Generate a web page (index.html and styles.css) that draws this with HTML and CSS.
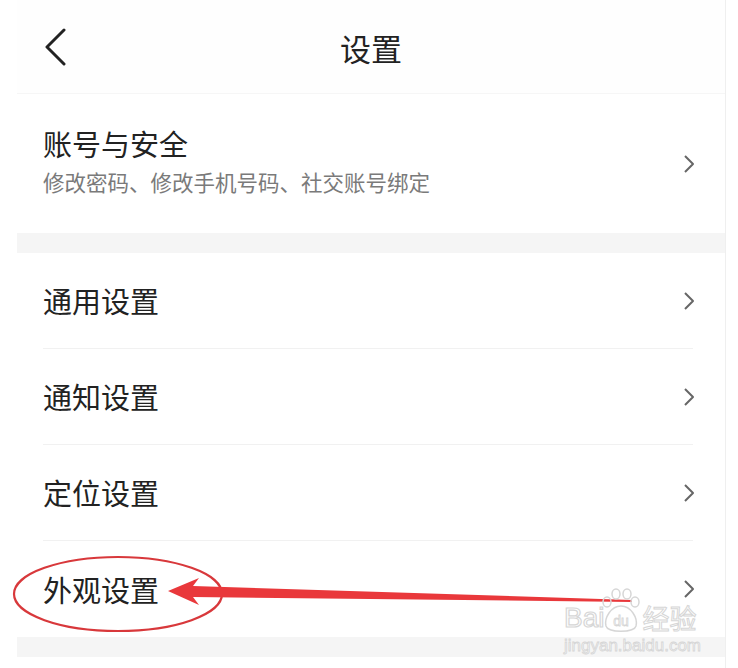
FILE: index.html
```html
<!DOCTYPE html>
<html lang="zh-CN">
<head>
    <meta charset="UTF-8">
    <meta name="viewport" content="width=device-width, initial-scale=1.0">
    <title>设置</title>
    <link rel="stylesheet" href="styles.css">
</head>
<body>
    <div class="screen">
        <div class="status-blur"></div>
        <header class="topbar">
            <svg class="back" width="24" height="38" viewBox="0 0 24 38">
                <path d="M20 2 L3 19 L20 36" fill="none" stroke="#222" stroke-width="3" stroke-linecap="round" stroke-linejoin="round"/>
            </svg>
            <h1 class="title">设置</h1>
        </header>

        <section class="group">
            <div class="item item-account">
                <div class="item-text">
                    <div class="item-name">账号与安全</div>
                    <div class="item-desc">修改密码、修改手机号码、社交账号绑定</div>
                </div>
                <svg class="arrow" width="12" height="20" viewBox="0 0 12 20">
                    <path d="M2 2 L10 10 L2 18" fill="none" stroke="#666" stroke-width="2" stroke-linejoin="round"/>
                </svg>
            </div>
        </section>

        <div class="gap"></div>

        <section class="group">
            <div class="item">
                <div class="item-name">通用设置</div>
                <svg class="arrow" width="12" height="20" viewBox="0 0 12 20">
                    <path d="M2 2 L10 10 L2 18" fill="none" stroke="#666" stroke-width="2" stroke-linejoin="round"/>
                </svg>
            </div>
            <div class="item">
                <div class="item-name">通知设置</div>
                <svg class="arrow" width="12" height="20" viewBox="0 0 12 20">
                    <path d="M2 2 L10 10 L2 18" fill="none" stroke="#666" stroke-width="2" stroke-linejoin="round"/>
                </svg>
            </div>
            <div class="item">
                <div class="item-name">定位设置</div>
                <svg class="arrow" width="12" height="20" viewBox="0 0 12 20">
                    <path d="M2 2 L10 10 L2 18" fill="none" stroke="#666" stroke-width="2" stroke-linejoin="round"/>
                </svg>
            </div>
            <div class="item">
                <div class="item-name">外观设置</div>
                <svg class="arrow" width="12" height="20" viewBox="0 0 12 20">
                    <path d="M2 2 L10 10 L2 18" fill="none" stroke="#666" stroke-width="2" stroke-linejoin="round"/>
                </svg>
            </div>
        </section>

        <div class="gap"></div>
    </div>

    <!-- annotation drawn over the screenshot -->
    <svg class="markup" width="738" height="668" viewBox="0 0 738 668">
        <ellipse cx="118" cy="594" rx="104" ry="37" fill="none" stroke="#d8383b" stroke-width="2.2"/>
        <polygon points="168,591 199,578 193,586 632,600 632,602 193,597 199,605" fill="#e9383b"/>
    </svg>

    <div class="watermark">
        <div class="wm-top">
            <span class="wm-bai">Bai</span>
            <svg class="wm-paw" width="40" height="46" viewBox="0 0 40 46">
                <g fill="none" stroke="#d6d6d6" stroke-width="1.5">
                    <ellipse cx="6" cy="14" rx="4" ry="5"/>
                    <ellipse cx="15" cy="6" rx="4" ry="5"/>
                    <ellipse cx="26" cy="6" rx="4" ry="5"/>
                    <ellipse cx="34" cy="14" rx="4" ry="5"/>
                    <path d="M20 18 C10 18 3 30 5 38 C7 45 33 45 35 38 C37 30 30 18 20 18 Z"/>
                </g>
                <text x="20" y="38" text-anchor="middle" class="wm-du">du</text>
            </svg>
            <span class="wm-cn">经验</span>
        </div>
        <div class="wm-url">jingyan.baidu.com</div>
    </div>
</body>
</html>
```

FILE: styles.css
```css
body {
    margin: 0;
    width: 738px;
    height: 668px;
    overflow: hidden;
    background: #fff;
    font-family: "Noto Sans CJK SC", "Noto Sans", sans-serif;
    color: #222;
    position: relative;
}
.screen {
    margin-left: 17px;
    width: 708px;
    height: 668px;
    border-right: 1px solid #efefef;
    position: relative;
}
.status-blur {
    position: absolute;
    left: 145px;
    top: 10px;
    width: 418px;
    height: 22px;
    background: #f8f8f8;
    filter: blur(3px);
}
.topbar {
    height: 94px;
    display: flex;
    align-items: center;
    justify-content: center;
    position: relative;
    background: #fefefe;
    border-bottom: 1px solid #f6f6f6;
    box-sizing: border-box;
}
.back {
    position: absolute;
    left: 27px;
    top: 28px;
}
.title {
    margin: 0;
    font-size: 31px;
    font-weight: 400;
    line-height: 1;
    padding-top: 2px;
}
.group {
    background: #fff;
}
.item {
    height: 96px;
    margin: 0 32px 0 26px;
    display: flex;
    align-items: center;
    justify-content: space-between;
    border-bottom: 1px solid #f1f1f1;
    box-sizing: border-box;
}
.item:last-child {
    border-bottom: none;
}
.item-account {
    height: 139px;
    border-bottom: none;
    padding-bottom: 6px;
}
.item-account .arrow {
    margin-top: 6px;
}
.item-name {
    font-size: 29px;
    line-height: 1;
    color: #222;
}
.item-desc {
    margin-top: 13px;
    font-size: 21.5px;
    line-height: 1;
    color: #7a7a7a;
}
.arrow {
    margin-right: -2px;
}
.gap {
    height: 20px;
    background: #f5f5f5;
}
.markup {
    position: absolute;
    left: 0;
    top: 0;
    pointer-events: none;
}
.watermark {
    position: absolute;
    left: 564px;
    top: 586px;
    width: 136px;
    color: transparent;
    font-family: "Liberation Sans", sans-serif;
}
.wm-top {
    display: flex;
    align-items: flex-end;
    height: 48px;
}
.wm-bai {
    font-size: 28px;
    line-height: 1;
    -webkit-text-stroke: 1.2px #d6d6d6;
    margin-bottom: 2px;
}
.wm-paw {
    margin-left: -3px;
}
.wm-du {
    font-family: "Liberation Sans", sans-serif;
    font-size: 14px;
    fill: none;
    stroke: #d6d6d6;
    stroke-width: 0.8;
}
.wm-cn {
    font-family: "Noto Sans CJK SC", sans-serif;
    font-size: 27px;
    line-height: 1;
    -webkit-text-stroke: 1px #d6d6d6;
    margin-left: 1px;
    margin-bottom: 3px;
}
.wm-url {
    font-size: 17px;
    line-height: 1;
    margin-top: 3px;
    -webkit-text-stroke: 0.8px #d6d6d6;
}
```
